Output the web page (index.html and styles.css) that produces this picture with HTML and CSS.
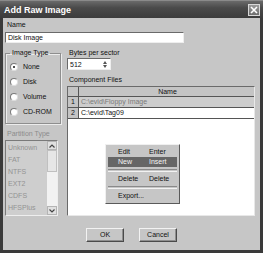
FILE: index.html
```html
<!DOCTYPE html>
<html lang="en">
<head>
    <meta charset="UTF-8">
    <title>Add Raw Image</title>
    <link rel="stylesheet" href="styles.css">
</head>
<body>

<div class="window">
    <div class="titlebar">
        <span class="title">Add Raw Image</span>
        <span class="close">
            <svg width="8" height="8" viewBox="0 0 8 8"><path d="M1 1L7 7M7 1L1 7" stroke="#fff" stroke-width="1.6"/></svg>
        </span>
    </div>

    <div class="client">
        <div class="lbl">Name</div>
        <div class="textbox name-box">Disk Image</div>

        <div class="columns">
            <!-- Left column: image type + partition type -->
            <div class="leftcol">
                <fieldset class="group">
                    <legend>Image Type</legend>
                    <div class="radio checked"><span class="dot"></span>None</div>
                    <div class="radio"><span class="dot"></span>Disk</div>
                    <div class="radio"><span class="dot"></span>Volume</div>
                    <div class="radio"><span class="dot"></span>CD-ROM</div>
                </fieldset>

                <div class="lbl disabled part-lbl">Partition Type</div>
                <div class="listbox">
                    <div class="items">
                        <div>Unknown</div>
                        <div>FAT</div>
                        <div>NTFS</div>
                        <div>EXT2</div>
                        <div>CDFS</div>
                        <div>HFSPlus</div>
                    </div>
                    <div class="vscroll">
                        <div class="sb-btn">
                            <svg width="6" height="4" viewBox="0 0 6 4"><path d="M0.5 3.5L3 1L5.5 3.5" fill="none" stroke="#444" stroke-width="1.2"/></svg>
                        </div>
                        <div class="sb-thumb"></div>
                        <div class="sb-track"></div>
                        <div class="sb-btn">
                            <svg width="6" height="4" viewBox="0 0 6 4"><path d="M0.5 0.5L3 3L5.5 0.5" fill="none" stroke="#444" stroke-width="1.2"/></svg>
                        </div>
                    </div>
                </div>
            </div>

            <!-- Right column: sector size + files table -->
            <div class="rightcol">
                <div class="lbl">Bytes per sector</div>
                <div class="spinbox">
                    <span class="spin-val">512</span>
                    <span class="spin-arrows">
                        <svg width="4" height="3" viewBox="0 0 4 3"><path d="M0 3L2 0L4 3Z" fill="#555"/></svg>
                        <svg width="4" height="3" viewBox="0 0 4 3"><path d="M0 0L2 3L4 0Z" fill="#555"/></svg>
                    </span>
                </div>

                <div class="lbl files-lbl">Component Files</div>
                <div class="filetable">
                    <div class="trow thead">
                        <div class="num"></div>
                        <div class="cell center">Name</div>
                    </div>
                    <div class="trow dim">
                        <div class="num">1</div>
                        <div class="cell">C:\evid\Floppy Image</div>
                    </div>
                    <div class="trow sel">
                        <div class="num">2</div>
                        <div class="cell">C:\evid\Tag09</div>
                    </div>

                    <!-- Context menu over the table -->
                    <div class="menu">
                        <div class="mitem"><span>Edit</span><span>Enter</span></div>
                        <div class="mitem hot"><span>New</span><span>Insert</span></div>
                        <div class="msep"></div>
                        <div class="mitem"><span>Delete</span><span>Delete</span></div>
                        <div class="msep"></div>
                        <div class="mitem"><span>Export...</span><span></span></div>
                    </div>
                </div>
            </div>
        </div>

        <div class="buttons">
            <div class="btn">OK</div>
            <div class="btn">Cancel</div>
        </div>
    </div>
</div>

</body>
</html>
```

FILE: styles.css
```css
/* Page */
body {
    margin: 0;
    font-family: 'Liberation Sans', Arial, sans-serif;
    font-size: 7px;
    color: #111;
    background: #3a3a3a;
}

/* Dialog frame */
.window {
    width: 263px;
    height: 253px;
    box-sizing: border-box;
    background: #3a3a3a;
    padding: 0 3px 3px 3px;
    display: flex;
    flex-direction: column;
}

.titlebar {
    height: 18px;
    margin: 0 -3px;
    padding: 0 3px 0 4px;
    display: flex;
    align-items: center;
    justify-content: space-between;
    background: linear-gradient(#6a6a6a, #4a4a4a 40%, #3c3c3c);
    border-top: 1px solid #8a8a8a;
    box-sizing: border-box;
}

.title {
    color: #fff;
    font-weight: bold;
    font-size: 9px;
}

.close {
    width: 12px;
    height: 12px;
    box-sizing: border-box;
    border: 1px solid #d8d8d8;
    background: linear-gradient(#9a9a9a, #6e6e6e);
    display: flex;
    align-items: center;
    justify-content: center;
}

.client {
    flex: 1;
    background: #c6c6c6;
    padding: 3px 2px 0 2px;
}

/* Labels */
.lbl {
    line-height: 8px;
    height: 8px;
    padding-left: 2px;
}

.disabled {
    color: #8c8c8c;
}

/* Sunken text field */
.textbox {
    background: #fff;
    border-top: 1px solid #6a6a6a;
    border-left: 1px solid #6a6a6a;
    border-right: 1px solid #eee;
    border-bottom: 1px solid #eee;
    box-sizing: border-box;
}

.name-box {
    margin-top: 3px;
    width: 179px;
    height: 11px;
    line-height: 9px;
    padding-left: 2px;
}

.columns {
    display: flex;
    gap: 6px;
    margin-top: 6px;
}

/* Left column */
.leftcol {
    width: 56px;
}

.group {
    margin: 0;
    padding: 2px 0 4px 0;
    border: 1px solid #8e8e8e;
    box-shadow: 1px 1px 0 #ececec, inset 1px 1px 0 #ececec;
}

.group legend {
    padding: 0 2px;
    margin-left: 4px;
    line-height: 8px;
}

.radio {
    height: 15px;
    display: flex;
    align-items: center;
    gap: 5px;
    padding-left: 4px;
}

.dot {
    width: 6px;
    height: 6px;
    border-radius: 50%;
    background: #fff;
    border: 1px solid #7a7a7a;
    border-right-color: #ddd;
    border-bottom-color: #ddd;
    display: flex;
    align-items: center;
    justify-content: center;
}

.checked .dot::after {
    content: "";
    width: 2px;
    height: 2px;
    border-radius: 50%;
    background: #111;
}

.part-lbl {
    margin-top: 6px;
}

.listbox {
    margin-top: 2px;
    width: 53px;
    height: 76px;
    box-sizing: border-box;
    display: flex;
    background: #cecece;
    border-top: 1px solid #7a7a7a;
    border-left: 1px solid #7a7a7a;
    border-right: 1px solid #eee;
    border-bottom: 1px solid #eee;
    color: #939393;
}

.items {
    flex: 1;
    padding: 1px 0 0 2px;
}

.items div {
    height: 12px;
    line-height: 12px;
}

.vscroll {
    width: 10px;
    display: flex;
    flex-direction: column;
    background: #f2f2f2;
}

.sb-btn {
    height: 9px;
    display: flex;
    align-items: center;
    justify-content: center;
    background: #e0e0e0;
    border: 1px solid #b4b4b4;
    box-sizing: border-box;
}

.sb-thumb {
    height: 22px;
    background: #e6e6e6;
    border: 1px solid #c0c0c0;
    box-sizing: border-box;
}

.sb-track {
    flex: 1;
}

/* Right column */
.rightcol {
    flex: 1;
    padding-right: 3px;
}

.spinbox {
    margin-top: 1px;
    width: 44px;
    height: 12px;
    box-sizing: border-box;
    display: flex;
    align-items: center;
    justify-content: space-between;
    background: #fff;
    border-top: 1px solid #6a6a6a;
    border-left: 1px solid #6a6a6a;
    border-right: 1px solid #eee;
    border-bottom: 1px solid #eee;
    padding: 0 3px 0 2px;
}

.spin-arrows {
    display: flex;
    flex-direction: column;
    gap: 1px;
}

.spin-arrows svg {
    display: block;
}

.files-lbl {
    margin-top: 6px;
}

.filetable {
    position: relative;
    margin-top: 2px;
    height: 130px;
    background: #fff;
    border-top: 1px solid #6a6a6a;
    border-left: 1px solid #6a6a6a;
    border-right: 1px solid #e8e8e8;
    border-bottom: 1px solid #e8e8e8;
    box-sizing: border-box;
}

.trow {
    display: flex;
    height: 11px;
    line-height: 10px;
    border-bottom: 1px solid #555;
    box-sizing: border-box;
}

.thead {
    height: 10px;
    background: #c4c4c4;
}

.num {
    width: 11px;
    box-sizing: border-box;
    text-align: center;
    background: #c4c4c4;
    border-right: 1px solid #555;
}

.cell {
    flex: 1;
    padding-left: 2px;
}

.center {
    text-align: center;
}

.dim {
    background: #cdcdcd;
    color: #7a7a7a;
}

.dim .num {
    color: #111;
}

/* Context menu */
.menu {
    position: absolute;
    left: 37px;
    top: 57px;
    width: 75px;
    box-sizing: border-box;
    padding: 2px 2px 2px 2px;
    background: #c6c6c6;
    border: 1px solid #f0f0f0;
    border-right-color: #5a5a5a;
    border-bottom-color: #5a5a5a;
}

.mitem {
    height: 10px;
    line-height: 10px;
    display: flex;
    padding-left: 10px;
}

.mitem span:first-child {
    width: 31px;
}

.hot {
    background: #666;
    color: #f4f4f4;
}

.msep {
    height: 1px;
    margin: 2px 0 2px 0;
    border-top: 1px solid #8a8a8a;
    border-bottom: 1px solid #f2f2f2;
}

/* Dialog buttons */
.buttons {
    display: flex;
    justify-content: center;
    gap: 15px;
    margin-top: 12px;
}

.btn {
    width: 38px;
    height: 14px;
    box-sizing: border-box;
    line-height: 12px;
    text-align: center;
    background: #c6c6c6;
    border: 1px solid #f2f2f2;
    border-right-color: #4a4a4a;
    border-bottom-color: #4a4a4a;
    box-shadow: inset -1px -1px 0 #8e8e8e;
}
```
